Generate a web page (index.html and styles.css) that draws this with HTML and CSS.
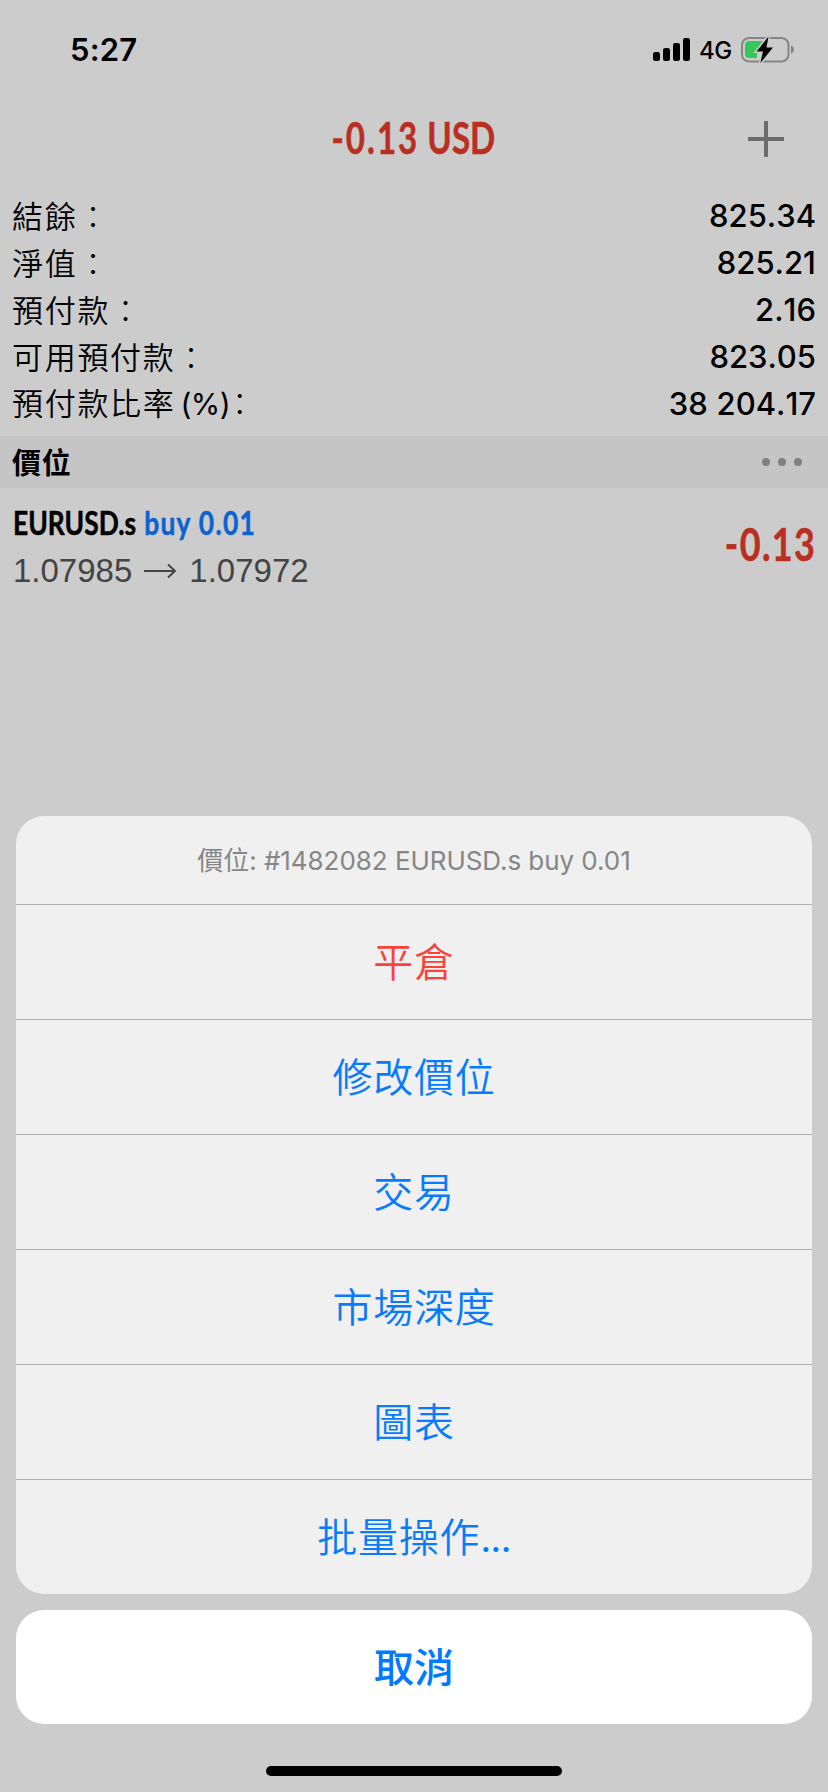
FILE: index.html
```html
<!DOCTYPE html>
<html lang="zh-Hant">
<head>
<meta charset="utf-8">
<title>Trade</title>
<link rel="stylesheet" href="styles.css">
</head>
<body>
<div class="screen">
  <header class="status">
    <span class="time">5:27</span>
    <div class="indicators">
      <svg class="signal" width="38" height="24" viewBox="0 0 38 24"><rect x="0" y="14" width="7" height="9" rx="2.2"/><rect x="10" y="10" width="7" height="13" rx="2.2"/><rect x="20" y="5" width="7" height="18" rx="2.2"/><rect x="30" y="0" width="7" height="23" rx="2.2"/></svg>
      <span class="network">4G</span>
      <svg width="54" height="28" viewBox="0 0 54 28">
        <rect x="2" y="2" width="46.500" height="23.500" rx="7" fill="none" stroke="#868688" stroke-width="2"/>
        <path d="M51 9.500q3 1 3 4t-3 4z" fill="#868688"/>
        <path d="M9 5H24L17 15V22H9Q5 22 5 18V9Q5 5 9 5Z" fill="#34c759"/>
        <path d="M28.500 0.500L16.500 15.500H23L20.300 27L33 11.500H26.500Z" fill="#000" stroke="#ccc" stroke-width="3" paint-order="stroke"/>
      </svg>
    </div>
  </header>
  <nav class="titlebar">
    <h1 class="condensed title"><span class="amount">-0.13</span> USD</h1>
    <svg class="plus" width="36" height="36" viewBox="0 0 36 36"><path d="M18 0V36M0 18H36" stroke="#6c6c6c" stroke-width="4"/></svg>
  </nav>
  <dl class="summary">
    <div class="row"><dt>結餘<span class="colon">：</span></dt><dd>825.34</dd></div>
    <div class="row"><dt>淨值<span class="colon">：</span></dt><dd>825.21</dd></div>
    <div class="row"><dt>預付款<span class="colon">：</span></dt><dd>2.16</dd></div>
    <div class="row"><dt>可用預付款<span class="colon">：</span></dt><dd>823.05</dd></div>
    <div class="row"><dt>預付款比率<span class="unit">(%)</span><span class="colon tight">：</span></dt><dd>38 204.17</dd></div>
  </dl>
  <div class="section">
    <h2>價位</h2>
    <svg width="40" height="8" viewBox="0 0 40 8" fill="#808080"><circle cx="4" cy="4" r="4"/><circle cx="20" cy="4" r="4"/><circle cx="36" cy="4" r="4"/></svg>
  </div>
  <div class="position">
    <div>
      <div class="condensed symbol">EURUSD.s <span class="side">buy 0.01</span></div>
      <div class="prices">1.07985<svg class="arrow" width="33" height="16" viewBox="0 0 33 16"><path d="M0 8H31M24 1.500L31 8L24 14.500" fill="none" stroke="#444446" stroke-width="1.900"/></svg>1.07972</div>
    </div>
    <div class="condensed profit">-0.13</div>
  </div>
  <div class="sheet">
    <div class="actions">
      <div class="caption">價位: #1482082 EURUSD.s buy 0.01</div>
      <div class="action danger">平倉</div>
      <div class="action">修改價位</div>
      <div class="action">交易</div>
      <div class="action">市場深度</div>
      <div class="action">圖表</div>
      <div class="action">批量操作<span class="dots">...</span></div>
    </div>
    <div class="cancel">取消</div>
    <div class="home"></div>
  </div>
</div>
</body>
</html>
```

FILE: styles.css
```css
* { box-sizing: border-box; }
body { margin: 0; background: #ccc; color: #000; font-family: Inter, "Noto Sans CJK TC", sans-serif; }
h1, h2, dl, dd { margin: 0; }
svg { display: block; flex: none; }
.screen { width: 828px; height: 1792px; display: flex; flex-direction: column; overflow: hidden; white-space: nowrap; }
.status { height: 100px; padding: 0 34px 0 70px; display: flex; justify-content: space-between; align-items: center; }
.time { font-size: 31px; font-weight: 600; line-height: 40px; letter-spacing: 0.2px; }
.indicators { display: flex; align-items: center; }
.signal { margin-right: 8px; }
.network { font-size: 24px; font-weight: 450; width: 41px; letter-spacing: -0.5px; line-height: 30px; padding-top: 2px; }
.titlebar { height: 92px; padding: 0 44px 14px 0; display: grid; grid-template-columns: 1fr 36px; align-items: center; }
.condensed { font-family: Lato, sans-serif; font-weight: 700; -webkit-text-stroke: 0.5px currentColor; }
.title { grid-column: 1 / 3; grid-row: 1; justify-self: center; margin-left: 42px; font-size: 43px; line-height: 52px; padding-bottom: 3px; color: #b93022; transform: scaleX(0.77); }
.amount { letter-spacing: 2.6px; }
.plus { grid-column: 2; grid-row: 1; }
.summary { height: 244px; padding: 0 12px; }
.row { height: 47px; display: flex; justify-content: space-between; align-items: center; }
dt { font-family: "Noto Sans CJK TC", sans-serif; font-weight: 350; font-size: 31px; letter-spacing: 1.7px; line-height: 45px; padding-bottom: 2px; }
.unit { font-family: Inter, sans-serif; font-weight: 400; font-size: 30px; letter-spacing: -0.6px; margin-left: 5px; }
.colon { font-weight: 300; }
.tight { font-feature-settings: "halt"; margin-left: 2px; }
dd { font-size: 31px; font-weight: 500; word-spacing: 0.5px; font-kerning: none; }
.section { height: 52px; padding: 0 26px 0 12px; display: flex; justify-content: space-between; align-items: center; background: #c5c5c5; }
h2 { font-family: "Noto Sans CJK TC", sans-serif; font-size: 29px; font-weight: 700; line-height: 50px; padding-bottom: 2px; letter-spacing: 0.8px; }
.position { height: 122px; padding: 0 13px; display: flex; justify-content: space-between; }
.symbol { margin-top: 12px; font-size: 33px; line-height: 44px; transform: scaleX(0.8); transform-origin: left; }
.side { color: #0b63ce; letter-spacing: 1.6px; margin-left: 2px; }
.prices { display: flex; align-items: center; font-family: "Liberation Sans", sans-serif; font-size: 33px; line-height: 48px; padding-top: 3px; color: #444446; }
.arrow { margin: 0 12px; }
.profit { font-size: 45px; line-height: 112px; letter-spacing: 1.7px; margin-right: -1px; color: #b93022; transform: scaleX(0.8); transform-origin: right; }
.sheet { margin-top: auto; padding: 0 16px; height: 976px; }
.actions { height: 778px; border-radius: 28px; background: #f0f0f0; overflow: hidden; }
.caption { height: 88px; text-align: center; font-size: 26px; line-height: 90px; letter-spacing: -0.05px; color: #868686; }
.action { height: 115px; border-top: 1px solid #b0b0b0; text-align: center; font-family: "Noto Sans CJK TC", sans-serif; font-weight: 350; font-size: 40px; line-height: 110px; letter-spacing: 0.8px; color: #087bfb; }
.danger { color: #f9433a; }
.dots { font-family: Inter, sans-serif; font-weight: 500; font-size: 35px; letter-spacing: -0.5px; }
.cancel { height: 114px; margin-top: 16px; border-radius: 28px; background: #fff; text-align: center; font-family: "Noto Sans CJK TC", sans-serif; font-weight: 500; font-size: 40px; line-height: 110px; color: #007aff; }
.home { width: 296px; height: 10px; margin: 42px auto 0; border-radius: 5px; background: #000; }
```
